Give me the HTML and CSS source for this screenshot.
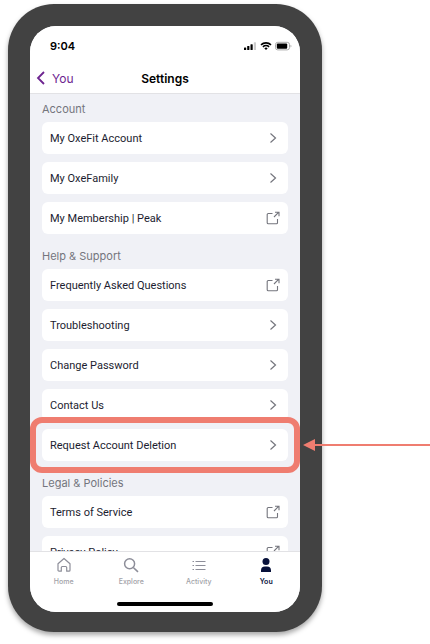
FILE: index.html
```html
<!DOCTYPE html>
<html lang="en">
<head>
  <meta charset="UTF-8">
  <meta name="viewport" content="width=device-width, initial-scale=1.0">
  <title>Settings</title>
  <link rel="stylesheet" href="styles.css">
</head>
<body>
  <!-- Shared icons -->
  <svg class="sprite" aria-hidden="true">
    <symbol id="chevron" viewBox="0 0 14 14">
      <path d="M4.5 2.500 9.500 7l-5 4.500" fill="none" stroke="currentColor" stroke-width="1.200"/>
    </symbol>
    <symbol id="external" viewBox="0 0 14 14">
      <path d="M6.500 2.500H2.200a1 1 0 0 0-1 1v8.300a1 1 0 0 0 1 1h8.300a1 1 0 0 0 1-1V8M8 6l4.800-4.800M9 1.200h4v4" fill="none" stroke="currentColor" stroke-width="1.100"/>
    </symbol>
  </svg>

  <div class="stage">
    <div class="phone">
      <div class="screen">
        <header class="header">
          <div class="status">
            <span>9:04</span>
            <svg width="48" height="10" viewBox="0 0 48 10" aria-hidden="true">
              <rect x="0" y="6.500" width="2.200" height="2.500" rx=".6"/>
              <rect x="3.200" y="5" width="2.200" height="4" rx=".6"/>
              <rect x="6.500" y="3.200" width="2.200" height="5.800" rx=".6"/>
              <rect x="9.800" y="1.200" width="2.200" height="7.800" rx=".6" fill="#ccc"/>
              <path d="M17 3.900a7.200 7.200 0 0 1 10 0M18.900 5.900a4.500 4.500 0 0 1 6.200 0" fill="none" stroke="#000" stroke-width="1.600"/>
              <path d="M20.300 7.300a2.600 2.600 0 0 1 3.400 0L22 9z"/>
              <rect x="31.500" y="1.300" width="14" height="7.600" rx="2.300" fill="none" stroke="#aaa"/>
              <rect x="32.800" y="2.500" width="10.400" height="5.200" rx="1"/>
              <path d="M46.500 3.800a1.500 1.500 0 0 1 0 2.800z" fill="#aaa"/>
            </svg>
          </div>
          <div class="titlebar">
            <a class="back" href="#you">
              <svg width="10" height="14" viewBox="0 0 10 14" aria-hidden="true"><path d="M8 1 2 7l6 6" fill="none" stroke="currentColor" stroke-width="1.800"/></svg>
              You
            </a>
            <h1>Settings</h1>
          </div>
        </header>

        <main class="settings">
          <section>
            <h2>Account</h2>
            <ul>
              <li><a class="row" href="#account">My OxeFit Account <svg><use href="#chevron"/></svg></a></li>
              <li><a class="row" href="#family">My OxeFamily <svg><use href="#chevron"/></svg></a></li>
              <li><a class="row" href="#membership">My Membership | Peak <svg><use href="#external"/></svg></a></li>
            </ul>
          </section>
          <section>
            <h2>Help &amp; Support</h2>
            <ul>
              <li><a class="row" href="#faq">Frequently Asked Questions <svg><use href="#external"/></svg></a></li>
              <li><a class="row" href="#troubleshooting">Troubleshooting <svg><use href="#chevron"/></svg></a></li>
              <li><a class="row" href="#password">Change Password <svg><use href="#chevron"/></svg></a></li>
              <li><a class="row" href="#contact">Contact Us <svg><use href="#chevron"/></svg></a></li>
              <li><a class="row highlight" href="#deletion">Request Account Deletion <svg><use href="#chevron"/></svg></a></li>
            </ul>
          </section>
          <section>
            <h2>Legal &amp; Policies</h2>
            <ul>
              <li><a class="row" href="#terms">Terms of Service <svg><use href="#external"/></svg></a></li>
              <li><a class="row" href="#privacy">Privacy Policy <svg><use href="#external"/></svg></a></li>
            </ul>
          </section>
        </main>

        <footer class="footer">
          <nav class="tabs">
            <a href="#home">
              <svg viewBox="0 0 16 16" aria-hidden="true"><path d="M2 6.800 8 1.500l6 5.300v6.400a1 1 0 0 1-1 1h-2.300V10.500a1 1 0 0 0-1-1H6.300a1 1 0 0 0-1 1v3.700H3a1 1 0 0 1-1-1z" fill="none" stroke="currentColor" stroke-width="1.200" stroke-linejoin="round"/></svg>
              Home
            </a>
            <a href="#explore">
              <svg viewBox="0 0 16 16" aria-hidden="true"><circle cx="6.600" cy="6.800" r="5" fill="none" stroke="currentColor" stroke-width="1.500"/><path d="m10.300 10.500 4.700 4.300" stroke="currentColor" stroke-width="1.600"/></svg>
              Explore
            </a>
            <a href="#activity">
              <svg viewBox="0 0 16 16" aria-hidden="true"><path d="M1.500 4.500H3m1.500 0h10M1.500 8.500H3m1.500 0h10M1.500 12.500H3m1.500 0h10" stroke="currentColor" stroke-width="1.100"/></svg>
              Activity
            </a>
            <a class="active" href="#you">
              <svg viewBox="0 0 16 16" aria-hidden="true"><circle cx="8" cy="4.600" r="3.500" fill="currentColor"/><path d="M3 15v-1.500a4 4 0 0 1 4-4h2a4 4 0 0 1 4 4V15z" fill="currentColor"/></svg>
              You
            </a>
          </nav>
          <div class="home-indicator"></div>
        </footer>
      </div>
    </div>

    <div class="arrow"></div>
  </div>
</body>
</html>
```
FILE: styles.css
```css
* {
  box-sizing: border-box;
}

body {
  margin: 0;
  background: #fff;
  font-family: Inter, "Liberation Sans", sans-serif;
  font-size: 11px;
  color: #1c1d30;
}

h1, h2, ul {
  margin: 0;
  padding: 0;
}

a {
  color: inherit;
  text-decoration: none;
}

.sprite {
  position: absolute;
  width: 0;
  height: 0;
}

.stage {
  display: flex;
  height: 100vh;
  padding: 4px 0 12px 8px;
}

/* Phone */
.phone {
  flex: 1;
  max-width: 420px;
  padding: 22px 22px 20px;
  background: #424242;
  border-radius: 46px;
  box-shadow: 0 3px 5px rgba(0, 0, 0, 0.35);
}

.screen {
  display: flex;
  flex-direction: column;
  height: 100%;
  overflow: hidden;
  background: #f0f1f6;
  border-radius: 26px;
}

/* Header */
.header {
  padding-bottom: 3px;
  background: #fff;
  border-bottom: 1px solid #e2e2e5;
}

.status {
  display: flex;
  align-items: center;
  justify-content: space-between;
  height: 40px;
  padding: 0 8px 0 20px;
  font-weight: 600;
  color: #000;
}

.titlebar {
  display: grid;
  grid-template-columns: 1fr auto 1fr;
  align-items: center;
  height: 24px;
  padding: 0 6px;
}

.titlebar h1 {
  font-size: 12px;
  font-weight: 600;
  color: #000;
}

.back {
  display: flex;
  align-items: center;
  gap: 6px;
  font-size: 12px;
  color: #6d2490;
}

/* Settings list */
.settings {
  flex: 1;
  min-height: 0;
  padding: 5px 12px 0;
  overflow: hidden;
}

.settings section {
  margin-bottom: 12px;
}

.settings h2 {
  margin-bottom: 3px;
  font-size: 11px;
  font-weight: 400;
  line-height: 20px;
  color: #74757d;
}

.settings ul {
  display: grid;
  gap: 8px;
  list-style: none;
}

.row {
  position: relative;
  display: flex;
  align-items: center;
  justify-content: space-between;
  height: 32px;
  padding: 0 8px;
  font-family: Roboto, Inter, sans-serif;
  background: #fff;
  border-radius: 6px;
}

.row svg {
  width: 14px;
  height: 14px;
  color: #74757d;
}

.highlight::after {
  content: "";
  position: absolute;
  inset: -12px;
  border: 6px solid #ef7d70;
  border-radius: 12px;
}

/* Tab bar */
.footer {
  padding: 5px 0 6px;
  background: #fff;
  border-top: 1px solid #e2e2e5;
}

.tabs {
  display: grid;
  grid-template-columns: repeat(4, 1fr);
}

.tabs a {
  display: flex;
  flex-direction: column;
  align-items: center;
  gap: 4px;
  font-size: 7px;
  font-weight: 500;
  line-height: 10px;
  color: #a2a2a8;
}

.tabs svg {
  width: 16px;
  height: 16px;
  color: #8d8e99;
}

.tabs .active,
.tabs .active svg {
  color: #07113a;
}

.tabs .active {
  font-weight: 600;
}

.home-indicator {
  width: 96px;
  height: 4px;
  margin: 15px auto 0;
  background: #000;
  border-radius: 2px;
}

/* Arrow pointing at the highlighted row */
.arrow {
  z-index: 1;
  display: flex;
  align-items: center;
  width: 127px;
  height: 12px;
  margin: 435px 0 0 -19px;
}

.arrow::before {
  content: "";
  border: 6px solid transparent;
  border-right: 12px solid #ef7d70;
  border-left: 0;
}

.arrow::after {
  content: "";
  flex: 1;
  height: 2px;
  background: #ef7d70;
}
```
